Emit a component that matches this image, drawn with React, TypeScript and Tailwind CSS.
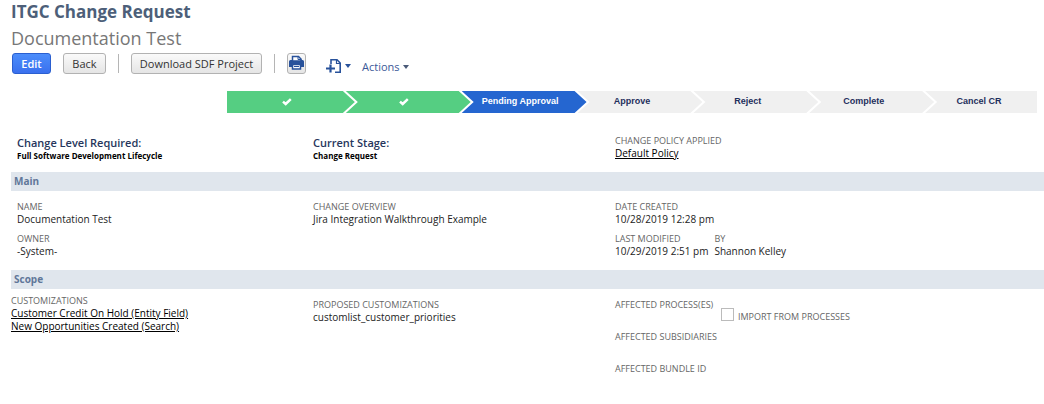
import React from "react";
import clsx from "clsx";

type Step = {
  label: string;
  state: "done" | "active" | "todo";
};

const steps: Step[] = [
  { label: "Submitted", state: "done" },
  { label: "Reviewed", state: "done" },
  { label: "Pending Approval", state: "active" },
  { label: "Approve", state: "todo" },
  { label: "Reject", state: "todo" },
  { label: "Complete", state: "todo" },
  { label: "Cancel CR", state: "todo" },
];

const stepColors = {
  done: "bg-[#55ce82] text-white",
  active: "bg-[#2566d0] text-white",
  todo: "bg-[#f0f0f0] text-[#1f2f5c]",
};

const CheckIcon = (): React.JSX.Element => (
  <svg width="10" height="8" viewBox="0 0 10 8" fill="none" aria-hidden="true">
    <path d="M1 3.6 3.7 6 8.8 1.2" stroke="currentColor" strokeWidth="2.5" />
  </svg>
);

const CaretIcon = ({ className }: { className?: string }): React.JSX.Element => (
  <svg width="6" height="4" viewBox="0 0 6 4" className={className} aria-hidden="true">
    <path d="M0 0h6L3 4z" fill="currentColor" />
  </svg>
);

const PrintIcon = (): React.JSX.Element => (
  <svg width="16" height="16" viewBox="0 0 16 16" className="shrink-0" aria-hidden="true">
    <path d="M1.5 5h12A1.5 1.5 0 0 1 15 6.5V12H0V6.5A1.5 1.5 0 0 1 1.5 5z" fill="#28529b" />
    <path d="M3.5 6V1.5h6L12 4v2z" fill="#fff" stroke="#28529b" strokeWidth="1.5" />
    <path d="M9 1v3.5h3.5" fill="none" stroke="#28529b" />
    <path d="M3.5 9.5h8v4.5h-8z" fill="#fff" stroke="#28529b" strokeWidth="1.5" />
    <path d="M5 11.5h5" stroke="#28529b" />
  </svg>
);

const NewPageIcon = (): React.JSX.Element => (
  <svg width="16" height="16" viewBox="0 0 16 16" aria-hidden="true">
    <path d="M5 6V1.8h6L14.2 5v9.2H9" fill="none" stroke="#28529b" strokeWidth="1.6" />
    <path d="M10.5 1.5v4h4" fill="none" stroke="#28529b" strokeWidth="1.2" />
    <path d="M0 10.5h9M4.5 6.5v8" stroke="#28529b" strokeWidth="2.2" />
  </svg>
);

const StepBar = (): React.JSX.Element => (
  <ol className="ml-[216px] mr-[7px] mt-[17px] grid grid-cols-[119fr_repeat(5,116fr)_112fr]">
    {steps.map((step, i) => {
      const isFirst = i === 0;
      const isLast = i === steps.length - 1;
      return (
        <li
          key={step.label}
          aria-current={step.state === "active" ? "step" : undefined}
          className={clsx(
            "flex h-[22px] items-center justify-center whitespace-nowrap font-['Liberation_Sans',sans-serif] text-[9px] font-bold",
            stepColors[step.state],
            isFirst && "-mr-[9px] pr-2 [clip-path:polygon(0_0,calc(100%_-_12px)_0,100%_50%,calc(100%_-_12px)_100%,0_100%)]",
            isLast && "pr-1 [clip-path:polygon(0_0,100%_0,100%_100%,0_100%,12px_50%)]",
            !isFirst && !isLast && "-mr-[9px] [clip-path:polygon(0_0,calc(100%_-_12px)_0,100%_50%,calc(100%_-_12px)_100%,0_100%,12px_50%)]",
            !isFirst && !isLast && (step.state === "todo" ? "pr-4" : "pr-2"),
          )}
        >
          {step.state === "done" ? <CheckIcon /> : step.label}
        </li>
      );
    })}
  </ol>
);

const SectionTitle = ({ children }: { children: React.ReactNode }): React.JSX.Element => (
  <h2 className="h-[19px] bg-[#e0e6ed] pl-[3px] text-[10px] font-bold leading-[19px] text-[#607799]">
    {children}
  </h2>
);

type FieldProps = {
  label: string;
  children?: React.ReactNode;
};

const Field = ({ label, children }: FieldProps): React.JSX.Element => (
  <dl className="min-h-[26px] text-[10px] leading-[13px]">
    <dt className="text-[9px] uppercase text-[#666]">{label}</dt>
    <dd className="text-[#222]">{children}</dd>
  </dl>
);

const Summary = ({ label, children }: FieldProps): React.JSX.Element => (
  <dl className="pt-[2px]">
    <dt className="text-[11px] font-semibold leading-[13px] text-[#26365c]">{label}</dt>
    <dd className="text-[8px] font-bold leading-[13px] text-black">{children}</dd>
  </dl>
);

const columns = "grid grid-cols-[296fr_302fr_429fr] pl-[6px]";
const buttonStyle = "h-[21px] rounded-[3px] border border-[#b2b2b2] bg-linear-to-b from-[#fafafa] to-[#e5e5e5] text-[11px] leading-none text-[#333]";

export default function App(): React.JSX.Element {
  return (
    <main className="bg-white pb-6 pl-[11px] font-['Open_Sans',sans-serif]">
      <h1 className="text-[17px] font-bold leading-6 text-[#4d5f79]">ITGC Change Request</h1>
      <p className="mt-[2px] text-lg leading-6 text-[#777]">Documentation Test</p>

      <div className="ml-px mt-[2px] flex h-[22px] items-center">
        <button className="h-[21px] w-[39px] rounded-[3px] border border-[#2a5fd0] bg-linear-to-b from-[#4c8dfb] to-[#3a70ee] text-[11px] font-semibold leading-none text-white">
          Edit
        </button>
        <button className={clsx(buttonStyle, "ml-3 w-[43px]")}>Back</button>
        <span className="ml-3 h-[19px] w-px bg-[#b5b5b5]" />
        <button className={clsx(buttonStyle, "ml-3 w-[131px] whitespace-nowrap")}>Download SDF Project</button>
        <span className="ml-3 h-[19px] w-px bg-[#b5b5b5]" />
        <button aria-label="Print" className={clsx(buttonStyle, "ml-3 flex w-[19px] items-center justify-center")}>
          <PrintIcon />
        </button>
        <button aria-label="New" className="ml-5 mt-[6px] flex items-center gap-[3px] text-[#28529b]">
          <NewPageIcon />
          <CaretIcon />
        </button>
        <button className="ml-[11px] mt-2 flex items-center gap-[3px] text-[11px] leading-4 text-[#3b5998]">
          Actions
          <CaretIcon className="text-[#4a5a78]" />
        </button>
      </div>

      <StepBar />

      <div className={clsx(columns, "pb-[10px] pt-[21px]")}>
        <Summary label="Change Level Required:">Full Software Development Lifecycle</Summary>
        <Summary label="Current Stage:">Change Request</Summary>
        <Field label="Change Policy Applied">
          <a href="#policy" className="text-black underline">Default Policy</a>
        </Field>
      </div>

      <SectionTitle>Main</SectionTitle>
      <div className={clsx(columns, "pb-3 pt-[9px]")}>
        <div className="flex flex-col gap-[6px]">
          <Field label="Name">Documentation Test</Field>
          <Field label="Owner">-System-</Field>
        </div>
        <Field label="Change Overview">Jira Integration Walkthrough Example</Field>
        <div className="flex flex-col gap-[6px]">
          <Field label="Date Created">10/28/2019 12:28 pm</Field>
          <div className="flex gap-[6px]">
            <Field label="Last Modified">10/29/2019 2:51 pm</Field>
            <Field label="By">Shannon Kelley</Field>
          </div>
        </div>
      </div>

      <SectionTitle>Scope</SectionTitle>
      <div className={clsx(columns, "pt-[9px]")}>
        <div className="-ml-[6px] -mt-1">
          <Field label="Customizations">
            <a href="#credit-hold" className="block text-black underline">Customer Credit On Hold (Entity Field)</a>
            <a href="#opportunities" className="block text-black underline">New Opportunities Created (Search)</a>
          </Field>
        </div>
        <Field label="Proposed Customizations">customlist_customer_priorities</Field>
        <div className="flex">
          <div className="flex flex-col gap-[6px]">
            <Field label="Affected Process(es)" />
            <Field label="Affected Subsidiaries" />
            <Field label="Affected Bundle ID" />
          </div>
          <label className="ml-1 mt-2 flex h-4 items-center gap-1 text-[9px] uppercase leading-[13px] text-[#666]">
            <input type="checkbox" className="size-[13px] appearance-none border border-[#bbb] bg-white" />
            <span className="pt-1">Import from processes</span>
          </label>
        </div>
      </div>
    </main>
  );
}
